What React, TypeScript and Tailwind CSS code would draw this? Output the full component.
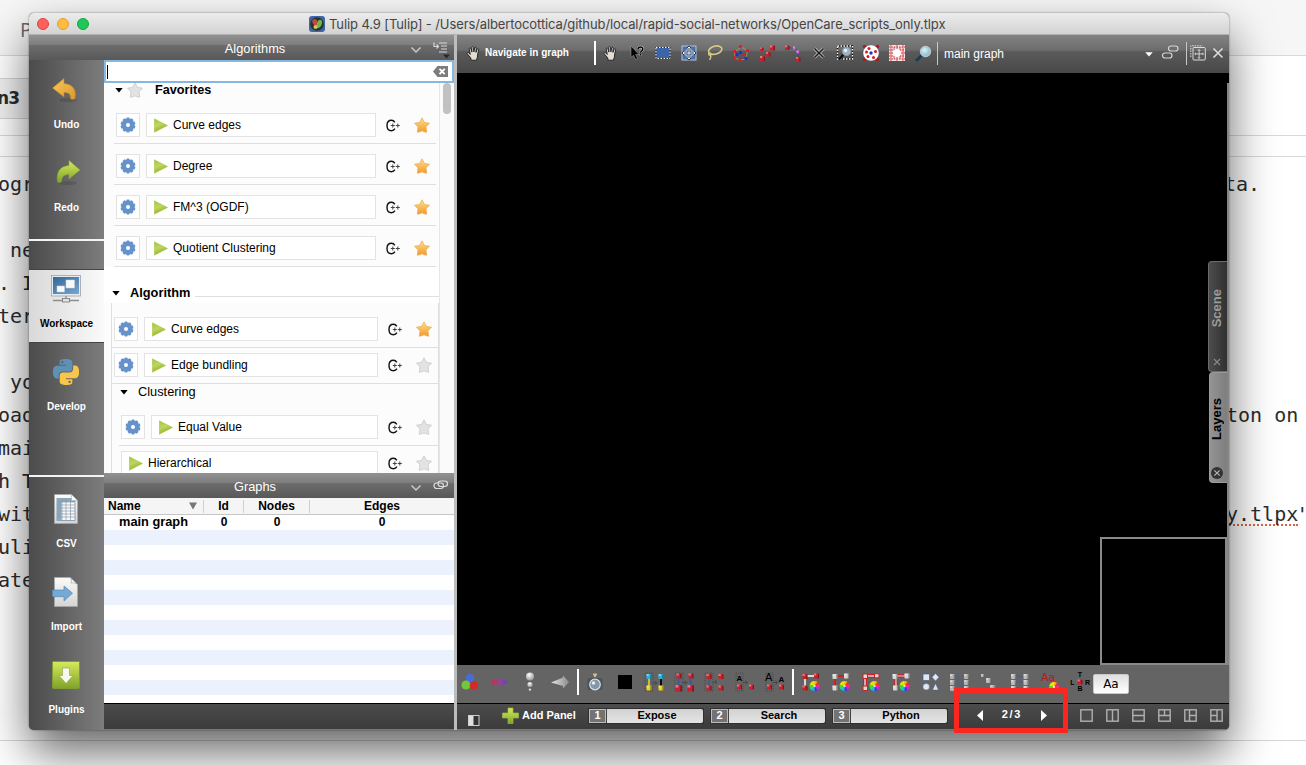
import React from "react";
import { clsx } from "clsx";

/* ---------- text behind the window ---------- */

const leftLines = ["ogr", "", " ne", ". I", "ter", "", " yo", "oad", "mai", "h T", "wit", "uli", "ate"];

function BackgroundPage() {
  return (
    <div className="flex h-full w-full flex-col bg-white text-[#2c2c2c]">
      <div className="flex h-[56px] shrink-0 items-center border-b border-[#d9d9d9] bg-[#f6f6f6] pl-5 pt-1 font-['Open_Sans',sans-serif] text-[20px] text-[#666]">
        P
      </div>
      <div className="flex h-[80px] shrink-0 items-center border-b border-[#d9d9d9] pt-[5px]">
        <div className="flex h-[41px] w-[60px] items-center overflow-hidden rounded-r border border-l-0 border-[#d4d4d4] bg-[#f1f1f1]">
          <span className="-ml-[3px] mt-[2px] font-['DejaVu_Sans',sans-serif] text-[17px] font-bold tracking-[-0.800px]">n3</span>
        </div>
      </div>
      <div className="h-[21px] shrink-0 border-b border-[#d9d9d9]" />
      <div className="flex h-[584px] shrink-0 flex-col overflow-hidden border-b border-[#d5d5d5] pt-[11px] font-['DejaVu_Sans_Mono',monospace] text-[20px] leading-[33px]">
        {leftLines.map((t, i) => (
          <div key={i} className="flex h-[33px] shrink-0">
            <span className="-ml-[2px] w-[1228px] shrink-0 whitespace-pre">{t}</span>
            {i === 0 && <span className="-ml-[2px]">ta.</span>}
            {i === 7 && <span className="whitespace-pre">ton on</span>}
            {i === 10 && (
              <span className="flex whitespace-pre">
                <span className="h-[28px] border-b-2 border-dotted border-[#d9644c]">y.tlpx</span>
                <span className="-ml-[2px]">'</span>
              </span>
            )}
          </div>
        ))}
      </div>
    </div>
  );
}

/* ---------- shared drawings ---------- */

const PY =
  "M14.25.18l.9.2.73.26.59.3.45.32.34.34.25.34.16.33.1.3.04.26.02.2-.01.13V8.5l-.05.63-.13.55-.21.46-.26.38-.3.31-.33.25-.35.19-.35.14-.33.1-.3.07-.26.04-.21.02H8.77l-.69.05-.59.14-.5.22-.41.27-.33.32-.27.35-.2.36-.15.37-.1.35-.07.32-.04.27-.02.21v3.06H3.17l-.21-.03-.28-.07-.32-.12-.35-.18-.36-.26-.36-.36-.35-.46-.32-.59-.28-.73-.21-.88-.14-1.05-.05-1.23.06-1.22.16-1.04.24-.87.32-.71.36-.57.4-.44.42-.33.42-.24.4-.16.36-.1.32-.05.24-.01h.16l.06.01h8.16v-.83H6.18l-.01-2.75-.02-.37.05-.34.11-.31.17-.28.25-.26.31-.23.38-.2.44-.18.51-.15.58-.12.64-.1.71-.06.77-.04.84-.02 1.27.05zm-6.3 1.98l-.23.33-.08.41.08.41.23.34.33.22.41.09.41-.09.33-.22.23-.34.08-.41-.08-.41-.23-.33-.33-.22-.41-.09-.41.09z";

function Gradients() {
  return (
    <svg className="absolute h-0 w-0">
      <defs>
        <linearGradient id="gold" x1="0" y1="0" x2="0" y2="1">
          <stop offset="0" stopColor="#fde08a" />
          <stop offset="1" stopColor="#f39a2e" />
        </linearGradient>
        <linearGradient id="undoG" x1="0" y1="0" x2="1" y2="1">
          <stop offset="0" stopColor="#f9c659" />
          <stop offset="1" stopColor="#d99a2c" />
        </linearGradient>
        <linearGradient id="lime" x1="0" y1="0" x2="0" y2="1">
          <stop offset="0" stopColor="#d6ea5c" />
          <stop offset="1" stopColor="#7fa32a" />
        </linearGradient>
        <linearGradient id="playG" x1="0" y1="0" x2="0.400" y2="1">
          <stop offset="0" stopColor="#a0c43e" />
          <stop offset="0.500" stopColor="#bfd660" />
          <stop offset="1" stopColor="#8fae22" />
        </linearGradient>
        <linearGradient id="screen" x1="0" y1="0" x2="1" y2="1">
          <stop offset="0" stopColor="#336698" />
          <stop offset="1" stopColor="#7ba6cc" />
        </linearGradient>
        <linearGradient id="paper" x1="0" y1="0" x2="0" y2="1">
          <stop offset="0" stopColor="#fbfbfb" />
          <stop offset="1" stopColor="#d4d4d4" />
        </linearGradient>
        <linearGradient id="pinkblue" x1="0" y1="0" x2="1" y2="0">
          <stop offset="0" stopColor="#d3264e" />
          <stop offset="0.5" stopColor="#a23aa5" />
          <stop offset="1" stopColor="#5046c0" />
        </linearGradient>
        <linearGradient id="silver" x1="0" y1="0" x2="1" y2="0">
          <stop offset="0" stopColor="#e6e6e6" />
          <stop offset="1" stopColor="#8b8b8b" />
        </linearGradient>
        <radialGradient id="ball" cx="0.4" cy="0.3" r="0.7">
          <stop offset="0" stopColor="#fff" />
          <stop offset="1" stopColor="#999" />
        </radialGradient>
        <radialGradient id="lens" cx="0.4" cy="0.35" r="0.7">
          <stop offset="0" stopColor="#d8f4fa" />
          <stop offset="1" stopColor="#7cb5cc" />
        </radialGradient>
      </defs>
    </svg>
  );
}

function Node({ x, y, s = 5, c = "#c8202c" }: { x: number; y: number; s?: number; c?: string }) {
  return (
    <g>
      <rect x={x} y={y} width={s} height={s} rx="0.8" fill={c} />
      <rect x={x} y={y} width={s * 0.45} height={s * 0.4} fill="#fff" opacity="0.4" />
      <rect x={x + s * 0.75} y={y + 0.5} width={s * 0.25} height={s - 0.5} fill="#000" opacity="0.35" />
    </g>
  );
}

const wheelColors = ["#ffb300", "#ff2a1a", "#ff1fa8", "#c020ff", "#2f35ff", "#15b6ff", "#14e58a", "#4be01a", "#d8f000", "#ffe600"];
function Wheel({ cx, cy, r }: { cx: number; cy: number; r: number }) {
  return (
    <g>
      {wheelColors.map((c, i) => {
        const a = (i / 10) * Math.PI * 2 - Math.PI / 2;
        const b = ((i + 1.05) / 10) * Math.PI * 2 - Math.PI / 2;
        return (
          <path
            key={c}
            fill={c}
            d={`M${cx} ${cy}L${cx + r * Math.cos(a)} ${cy + r * Math.sin(a)}A${r} ${r} 0 0 1 ${cx + r * Math.cos(b)} ${cy + r * Math.sin(b)}Z`}
          />
        );
      })}
      <circle cx={cx} cy={cy} r={r * 0.25} fill="#fff" opacity="0.7" />
    </g>
  );
}

function Ico({ children, w = 20, h = 20 }: { children: React.ReactNode; w?: number; h?: number }) {
  return (
    <svg width={w} height={h} viewBox={`0 0 ${w} ${h}`} className="shrink-0 overflow-visible">
      {children}
    </svg>
  );
}

function Hand() {
  return (
    <Ico w={16} h={16}>
      <path
        d="M5.2 15.2 4.7 12.8 1.2 8.8c-.6-.9.6-1.7 1.4-1l1.7 1.6L3.2 4c-.2-1.1 1.3-1.4 1.7-.3l1 3.4-.1-4.6c0-1.2 1.6-1.2 1.7 0l.4 4.4.7-4c.2-1.1 1.7-.9 1.6.2l-.3 4.3 1.3-3.1c.4-1 1.7-.6 1.5.4l-1 4.2-.3 3.2-1 3.1z"
        fill="#e4ddd6"
        stroke="#1c1c1c"
        strokeWidth="0.9"
      />
    </Ico>
  );
}

/* ---------- left sidebar ---------- */

const UndoIcon = () => (
  <Ico w={28} h={28}>
    <ellipse cx="16" cy="24" rx="9" ry="2" fill="#000" opacity="0.12" />
    <path d="M0.500 12 12 2.500v5C20 8 25 13 23 22.500c-.5 1-3 1-4.500.300C19 18.500 17 16.500 12 16.600V21z" fill="url(#undoG)" stroke="#c0842a" strokeWidth="0.6" />
  </Ico>
);
const RedoIcon = () => (
  <Ico w={28} h={28}>
    <ellipse cx="16" cy="24" rx="9" ry="2" fill="#000" opacity="0.12" />
    <path d="M28 11 17 1.500v5C9 7 4 12 5.500 22.500c.5 1.200 2.500 1.200 4 .300C9.500 18 12 15.500 17 15.600V20z" fill="url(#lime)" stroke="#86a838" strokeWidth="0.6" />
  </Ico>
);
const WorkspaceIcon = () => (
  <Ico w={32} h={28}>
    <rect x="1.500" y="0.500" width="29" height="20.500" fill="#e6ebef" stroke="#9aa4ad" strokeWidth="0.8" />
    <rect x="3" y="2" width="26" height="17" fill="url(#screen)" />
    <rect x="16" y="5" width="8.500" height="8" fill="#f7f9fb" stroke="#c9d6e2" strokeWidth="0.5" />
    <rect x="7" y="11" width="7.500" height="6" fill="#f7f9fb" stroke="#c9d6e2" strokeWidth="0.5" />
    <path d="M16 21v2.500M3 25.500h26" stroke="#8d8d8d" strokeWidth="1.300" />
    <rect x="12.500" y="23.500" width="7" height="3.500" fill="#e2e2e2" stroke="#777" strokeWidth="0.8" />
  </Ico>
);
const PythonIcon = () => (
  <svg width="26" height="26" viewBox="0 0 24 24">
    <path d={PY} fill="#5d92b6" />
    <path d={PY} fill="#f7c64a" transform="rotate(180 12 12)" />
  </svg>
);
const CsvIcon = () => (
  <Ico w={24} h={30}>
    <path d="M.5.500h17l6 6v23H.500z" fill="url(#paper)" stroke="#a9a9a9" strokeWidth="0.7" />
    <rect x="3" y="4.500" width="18" height="22" fill="#f7f9fa" stroke="#7e919e" strokeWidth="0.8" />
    <path d="M3 4.500h18V8H3zM3 8h4.500v18.500H3z" fill="#84abc4" />
    <path d="M3 8h18M3 11h18M3 14h18M3 17h18M3 20h18M3 23h18M8 4.500v22M12 4.500v22M16.500 4.500v22" stroke="#8a9aa5" strokeWidth="0.7" />
    <path d="M17.500.500v6h6z" fill="#fff" stroke="#aaa" strokeWidth="0.6" />
  </Ico>
);
const ImportIcon = () => (
  <Ico w={24} h={30}>
    <path d="M.5.500h16l7 7v22H.500z" fill="url(#paper)" stroke="#a9a9a9" strokeWidth="0.7" />
    <path d="M16 .500c2 1 1.500 4 1 5.500 2-.5 5 0 6.500 1.500z" fill="#fff" stroke="#999" strokeWidth="0.6" />
    <path d="M-1.500 13H10V9l8.500 7.200L10 24v-4.300H-1.500z" fill="#76a9d4" stroke="#5588b4" strokeWidth="0.7" />
  </Ico>
);
const PluginsIcon = () => (
  <Ico w={28} h={28}>
    <rect x="0.500" y="0.500" width="27" height="27" rx="1" fill="url(#lime)" stroke="#7f9d30" />
    <path d="M10.500 7h7v7.500H21L14 22.500 7 14.500h3.500z" fill="#f6f7ee" stroke="#8da339" strokeWidth="0.6" />
  </Ico>
);

function SideItem({ label, icon, active = false, short = false }: { label: string; icon: React.ReactNode; active?: boolean; short?: boolean }) {
  return (
    <div
      className={clsx(
        "flex shrink-0 flex-col items-center",
        short ? "h-[74px]" : "h-[83px]",
        active ? "border-y border-[#444] bg-linear-to-r from-[#d9d9d9] to-[#fafafa] text-black" : "text-white"
      )}
    >
      <div className={clsx("flex items-center justify-center pr-[2px]", active ? "h-[38px]" : "h-[40px]")}>{icon}</div>
      <div className={clsx("text-[10px] font-bold leading-[14px]", active ? "mt-[9px]" : "mt-[8px]")}>{label}</div>
    </div>
  );
}

function Sidebar() {
  return (
    <div className="flex w-[75px] shrink-0 flex-col bg-linear-to-r from-[#4b4b4b] to-[#7d7d7d]">
      <div className="h-[10px] shrink-0" />
      <SideItem label="Undo" icon={<UndoIcon />} />
      <SideItem label="Redo" icon={<RedoIcon />} />
      <div className="mb-[28px] mt-[3px] h-[2px] shrink-0 bg-[#f4f4f4]" />
      <SideItem label="Workspace" icon={<WorkspaceIcon />} active short />
      <div className="h-[9px] shrink-0" />
      <SideItem label="Develop" icon={<PythonIcon />} />
      <div className="mb-[12px] mt-[40px] h-[2px] shrink-0 bg-[#f4f4f4]" />
      <SideItem label="CSV" icon={<CsvIcon />} />
      <SideItem label="Import" icon={<ImportIcon />} />
      <SideItem label="Plugins" icon={<PluginsIcon />} short />
    </div>
  );
}

/* ---------- algorithms panel ---------- */

const Star = ({ on, size = 16 }: { on: boolean; size?: number }) => (
  <svg width={size} height={size} viewBox="0 0 20 20">
    <path
      d="M10 1l3 5.800 6.400.9-4.400 4.600.9 6.700-3.500-.6Q10 16.200 7.600 18.400l-3.500.6.900-6.700L.6 7.700 7 6.800z"
      fill={on ? "url(#gold)" : "#e3e3e3"}
      stroke={on ? "#e9ac50" : "#c4c4c4"}
      strokeWidth="0.9"
    />
  </svg>
);

const Gear = () => (
  <svg width="16" height="16" viewBox="0 0 16 16">
    {[0, 36, 72, 108, 144].map((a) => (
      <rect key={a} x="6.300" y="0.500" width="3.400" height="15" rx="1.200" fill="#6592cb" transform={`rotate(${a} 8 8)`} />
    ))}
    <circle cx="8" cy="8" r="6.200" fill="#6592cb" />
    <circle cx="8" cy="8" r="2" fill="#fff" />
  </svg>
);

const Play = () => (
  <svg width="15" height="15" viewBox="0 0 15 15" className="shrink-0">
    <path d="M.3.800 13.500 7.500.300 14.200z" fill="url(#playG)" stroke="#a9c544" strokeWidth="0.6" />
  </svg>
);

const Cpp = () => (
  <svg width="14" height="13" viewBox="0 0 14 13">
    <path d="M8.800 3.300C8 1.900 6.800 1.300 5.500 1.300 2.800 1.300 1 3.500 1 6.500s1.800 5.200 4.500 5.200c1.500 0 2.700-.8 3.400-2.100" fill="none" stroke="#111" strokeWidth="1.400" />
    <path d="M4.800 6.500h4M6.800 4.500v4M9.800 6.500h4M11.800 4.500v4" stroke="#444" strokeWidth="1" />
  </svg>
);

const Tri = () => (
  <svg width="8" height="5" viewBox="0 0 8 5" className="shrink-0">
    <path d="M.3 0h7.400L4 4.600z" fill="#000" />
  </svg>
);

type RowProps = { label: string; on?: boolean; gear?: boolean; kind: "fav" | "top" | "sub" };

function AlgoRow({ label, on = false, gear = true, kind }: RowProps) {
  return (
    <div
      className={clsx(
        "flex shrink-0 items-start border-b border-[#dfdfdf]",
        kind === "fav" && "ml-[10px] mr-[3px] h-[41px] pl-[2px] pt-[10px]",
        kind === "top" && "h-[36px] pl-[2px] pt-[5px]",
        kind === "sub" && "ml-[7px] h-[36px] pl-[2px] pt-[5px]"
      )}
    >
      {gear && (
        <div className="mr-[6px] flex h-6 w-6 shrink-0 items-center justify-center border border-[#e3e3e3] bg-white">
          <Gear />
        </div>
      )}
      <div className="flex h-6 min-w-0 flex-1 items-center gap-[4px] border border-[#e3e3e3] bg-white pl-[7px] text-[12px] text-black">
        <Play />
        <span>{label}</span>
      </div>
      <div className="ml-[10px] flex h-6 w-[14px] items-center">
        <Cpp />
      </div>
      <div className="ml-[14px] mr-[6px] flex h-6 items-center">
        <Star on={on} />
      </div>
    </div>
  );
}

function PanelHeader({ title, icon }: { title: string; icon: React.ReactNode }) {
  return (
    <div className="flex h-[25px] items-center bg-[linear-gradient(#929292,#7d7d7d_40%,#6c6c6c_42%,#585858)] text-[12.800px] text-white">
      <div className="w-[302px] pt-[2px] text-center">{title}</div>
      <div className="flex flex-1 items-center justify-end gap-[11px] pr-[6px]">
        <svg width="12" height="8" viewBox="0 0 12 8" className="mt-1">
          <path d="M1.500 1.500 6 6l4.500-4.500" fill="none" stroke="#c9c9c9" strokeWidth="1.500" />
        </svg>
        {icon}
      </div>
    </div>
  );
}

function AlgorithmsPanel() {
  return (
    <div className="flex h-[413px] shrink-0 flex-col overflow-hidden bg-white">
      <div className="flex h-[23px] shrink-0 items-center border-2 border-[#86b6e2] bg-white pr-[4px]">
        <div className="ml-[1px] h-[14px] w-[1px] bg-black" />
        <div className="flex-1" />
        <svg width="15" height="11" viewBox="0 0 15 11">
          <path d="M4.500 0H15v11H4.500L0 5.500z" fill="#7c7c7c" />
          <path d="M6.500 2.800l5.200 5.400M11.700 2.800 6.500 8.200" stroke="#fff" strokeWidth="1.900" />
        </svg>
      </div>
      <div className="flex min-h-0 flex-1">
        <div className="flex w-[335px] shrink-0 flex-col overflow-hidden bg-[#fcfcfc] text-black">
          <div className="flex h-[20px] shrink-0 items-start pl-[11px]">
            <div className="flex h-[14px] items-center">
              <Tri />
              <div className="ml-[4px] w-[28px]">
                <Star on={false} size={16} />
              </div>
              <span className="mt-[2px] text-[12.7px] font-bold">Favorites</span>
            </div>
          </div>
          <AlgoRow kind="fav" label="Curve edges" on />
          <AlgoRow kind="fav" label="Degree" on />
          <AlgoRow kind="fav" label="FM^3 (OGDF)" on />
          <AlgoRow kind="fav" label="Quotient Clustering" on />
          <div className="flex h-[36px] shrink-0 bg-white pl-[8px] pt-[18px]">
            <div className="flex h-[16px] flex-1 items-center">
              <Tri />
              <span className="ml-[10px] text-[12.8px] font-bold">Algorithm</span>
              <div className="ml-[5px] mt-[6px] h-px flex-1 bg-[#dfdfdf]" />
            </div>
          </div>
          <div className="ml-[7px] flex shrink-0 flex-col border-l border-r border-[#dfdfdf] pt-[9px]">
            <AlgoRow kind="top" label="Curve edges" on />
            <AlgoRow kind="top" label="Edge bundling" />
            <div className="flex h-[26px] shrink-0 items-start pl-[8px]">
              <div className="flex h-[16px] items-center gap-[10px]">
                <Tri />
                <span className="text-[12.8px]">Clustering</span>
              </div>
            </div>
            <AlgoRow kind="sub" label="Equal Value" />
            <AlgoRow kind="sub" label="Hierarchical" gear={false} />
          </div>
        </div>
        <div className="flex flex-1 justify-center border-l border-[#e6e6e6] bg-[#fafafa]">
          <div className="h-[31px] w-[8px] rounded-full bg-[#c1c1c1]" />
        </div>
      </div>
    </div>
  );
}

/* ---------- graphs panel ---------- */

function GraphsPanel() {
  return (
    <div className="flex min-h-0 flex-1 flex-col bg-white text-[12px] font-bold text-black">
      <div className="flex h-[17px] shrink-0 items-center border-b border-[#c6c6c6] bg-[#f5f5f5]">
        <div className="flex h-[13px] w-[100px] items-center justify-between border-r border-[#cfcfcf] pl-[4px] pr-[6px]">
          Name
          <svg width="8" height="8" viewBox="0 0 9 8">
            <path d="M0 0h9L4.500 8z" fill="#777" />
          </svg>
        </div>
        <div className="flex h-[13px] w-[40px] items-center justify-center border-r border-[#cfcfcf]">Id</div>
        <div className="flex h-[13px] w-[66px] items-center justify-center border-r border-[#cfcfcf]">Nodes</div>
        <div className="flex flex-1 items-center justify-center">Edges</div>
      </div>
      <div className="flex h-[15px] shrink-0 items-center pb-[2px]">
        <div className="w-[100px] pl-[15px] text-[12.8px]">main graph</div>
        <div className="w-[40px] text-center">0</div>
        <div className="w-[66px] text-center">0</div>
        <div className="flex-1 text-center">0</div>
      </div>
      {Array.from({ length: 11 }, (_, i) => (
        <div key={i} className={clsx("h-[15px] shrink-0", i % 2 === 0 ? "bg-[#ebf1fd]" : "bg-white")} />
      ))}
    </div>
  );
}

/* ---------- view toolbar ---------- */

const topIcons: React.ReactNode[] = [
  <Hand />,
  <Ico w={16} h={16}>
    <path d="M2 1v11.500l2.600-2.300 2 4.300 2-1-2-4.100h3.200z" fill="#000" stroke="#aaa" strokeWidth="0.500" />
    <path d="M9 4.200c0-3 5-3 4.800 0 0 1.800-2.200 1.600-2.200 3.500M11.600 8.900v1.500" fill="none" stroke="#ddd" strokeWidth="2.400" />
    <path d="M9 4.200c0-3 5-3 4.800 0 0 1.800-2.200 1.600-2.200 3.500M11.600 8.900v1.500" fill="none" stroke="#000" strokeWidth="1.500" />
  </Ico>,
  <Ico w={16} h={14}>
    <rect x="1" y="1.500" width="14" height="11" fill="#3c64a8" stroke="#1c2430" />
    <rect x="1" y="1.500" width="14" height="11" fill="none" stroke="#fff" strokeDasharray="1.500 1.500" />
  </Ico>,
  <Ico w={16} h={16}>
    <rect x="1" y="1" width="14" height="14" fill="#4c70aa" stroke="#b4c4dc" />
    <path d="M5 5h6v6H5z" fill="none" stroke="#c8d4e8" strokeWidth="0.800" />
    <path d="M8 2v12M2 8h12M6.500 3.500 8 2l1.500 1.500M6.500 12.500 8 14l1.500-1.500M3.500 6.500 2 8l1.500 1.500M12.500 6.500 14 8l-1.500 1.500" fill="none" stroke="#1e2c48" strokeWidth="2" />
    <path d="M8 2v12M2 8h12M6.500 3.500 8 2l1.500 1.500M6.500 12.500 8 14l1.500-1.500M3.500 6.500 2 8l1.500 1.500M12.500 6.500 14 8l-1.500 1.500" fill="none" stroke="#fff" strokeWidth="1" />
  </Ico>,
  <Ico w={18} h={16}>
    <ellipse cx="9.500" cy="5" rx="6.800" ry="4" fill="none" stroke="#d8ca8a" strokeWidth="1.600" transform="rotate(-15 10 6)" />
    <path d="M3.500 8c-1.500 1-1 2.600.8 2.200 1.500-.5.500-2.500-.7-2M4.500 10c1 2 0 3.500-1 5" fill="none" stroke="#d8ca8a" strokeWidth="1.300" />
  </Ico>,
  <Ico w={18} h={18}>
    <path d="M9 3 15.500 6.500 14 15 8 16 3 14 2.500 8z" fill="none" stroke="#b8a36a" strokeWidth="0.700" />
    {[[8.500, 2.500], [15.500, 6.500], [3, 7.500], [2.500, 13.500], [8, 16], [12, 10.500]].map(([x, y]) => (
      <circle key={`${x}`} cx={x} cy={y} r="1.600" fill="#e01820" />
    ))}
    {[[8.500, 8.500], [5, 10.500], [14, 14.500]].map(([x, y]) => (
      <circle key={`${x}`} cx={x} cy={y} r="1.700" fill="#2030d8" />
    ))}
  </Ico>,
  <Ico w={18} h={18}>
    <Node x={12} y={1.500} />
    <Node x={2} y={3.500} s={3.500} />
    <Node x={8} y={8} s={4.500} />
    <Node x={2} y={12} />
  </Ico>,
  <Ico w={18} h={18}>
    <path d="M4 4h7l3 4v6" fill="none" stroke="#4a4070" strokeWidth="0.800" />
    <Node x={1} y={1.500} s={4.500} />
    <Node x={9} y={2.500} s={3} c="#d26bf0" />
    <Node x={12.500} y={6.500} s={3} c="#d26bf0" />
    <Node x={12} y={13} s={4.500} />
  </Ico>,
  <Ico w={12} h={12}>
    <path d="M1.500 1.500l9 9M10.500 1.500l-9 9" stroke="#d0d0d0" strokeWidth="3" />
    <path d="M1.500 1.500l9 9M10.500 1.500l-9 9" stroke="#1a1a1a" strokeWidth="1.600" />
  </Ico>,
  <Ico w={18} h={16}>
    <rect x="1.500" y="1" width="15" height="13" fill="none" stroke="#111" strokeWidth="1.300" />
    <rect x="1.500" y="1" width="15" height="13" fill="none" stroke="#fff" strokeWidth="1.300" strokeDasharray="1.500 1.500" />
    <path d="M8 9 3 14.500" stroke="#111" strokeWidth="2.600" />
    <circle cx="10.500" cy="6.500" r="4.200" fill="#9db3c6" stroke="#8898a5" />
    <circle cx="9.500" cy="5.500" r="1.800" fill="#e4eef6" />
  </Ico>,
  <Ico w={18} h={18}>
    {[[2.500, 2.500], [15.500, 2.500], [2.500, 15.500], [15.500, 15.500]].map(([x, y]) => (
      <circle key={`${x}${y}`} cx={x} cy={y} r="1.700" fill="#a81a20" />
    ))}
    <circle cx="9" cy="9" r="7.800" fill="#fff" />
    {[[7, 4.500], [13.500, 7.500], [4.500, 8], [11.500, 13.500], [6, 12.500]].map(([x, y]) => (
      <circle key={`${x}${y}`} cx={x} cy={y} r="1.500" fill="#d81820" />
    ))}
    <circle cx="9" cy="9" r="1.700" fill="#2233c8" />
  </Ico>,
  <Ico w={16} h={16}>
    <rect width="16" height="16" fill="#f6e8e8" />
    <path d="M0 2h16M0 5h5M11 5h5M0 8h4M12 8h4M0 11h5M11 11h5M0 14h16" stroke="#cf3038" strokeWidth="1.100" strokeDasharray="1.500 1" />
    <path d="M2 0v16M14 0v16M8 0v4M8 12v4M5 2v3M11 2v3M5 11v3M11 11v3" stroke="#cf3038" strokeWidth="0.800" />
    <circle cx="8" cy="8" r="3.500" fill="#fff" />
  </Ico>,
  <Ico w={17} h={17}>
    <path d="M7 10 2 15" stroke="#1c3b58" strokeWidth="3" strokeLinecap="round" />
    <circle cx="10.500" cy="6.500" r="5" fill="url(#lens)" stroke="#b9c6cc" strokeWidth="1.300" />
  </Ico>,
];

function ViewToolbar() {
  return (
    <div className="flex h-[38px] shrink-0 items-center bg-[linear-gradient(#828282,#6c6c6c_40%,#5a5a5a_44%,#484848)] pb-[2px] text-white">
      <div className="flex w-[137px] shrink-0 items-center gap-[3px] pl-[9px]">
        <Hand />
        <span className="mb-[1px] whitespace-nowrap text-[10px] font-bold">Navigate in graph</span>
      </div>
      <div className="h-[24px] w-[2px] shrink-0 bg-white" />
      <div className="ml-[2px] flex shrink-0">
        {topIcons.map((ic, i) => (
          <div key={i} className="flex h-[24px] w-[26px] items-center justify-center">
            {ic}
          </div>
        ))}
      </div>
      <div className="ml-[1px] h-[23px] w-px shrink-0 bg-[#c8c8c8]" />
      <div className="flex h-[22px] flex-1 items-center justify-between pl-[6px] pr-[8px]">
        <span className="mt-[2px] text-[12px]">main graph</span>
        <svg width="8" height="5" viewBox="0 0 8 5" className="mt-[2px]">
          <path d="M.3.300h7.400L4 4.500z" fill="#fff" />
        </svg>
      </div>
      <div className="flex w-[33px] shrink-0 items-center pb-[2px]">
        <Ico w={18} h={14}>
          <rect x="7.500" y="1" width="9.500" height="5" rx="2.500" fill="none" stroke="#d6d6d6" strokeWidth="1.200" />
          <rect x="1.500" y="8" width="9.500" height="5" rx="2.500" fill="none" stroke="#d6d6d6" strokeWidth="1.200" />
        </Ico>
      </div>
      <div className="-ml-[8px] mr-[3px] h-[23px] w-px shrink-0 bg-[#c8c8c8]" />
      <Ico w={16} h={16}>
        <path d="M.8 12V.800H12.500" fill="none" stroke="#ddd" strokeDasharray="1.500 1" />
        <rect x="3" y="2.500" width="12.300" height="12.500" rx="1" fill="none" stroke="#ddd" />
        <path d="M9.100 4.500v9M4.800 8.900h8.700M8 5.600l1.100-1.100 1.100 1.100M8 12.300l1.100 1.100 1.100-1.100M6 7.800 4.800 8.900 6 10M12.400 7.800l1.100 1.100-1.100 1.100" fill="none" stroke="#ddd" strokeWidth="0.900" />
      </Ico>
      <div className="ml-[6px] mr-[5px]">
        <Ico w={12} h={12}>
          <path d="M1.500 1.500l9 9M10.500 1.500l-9 9" stroke="#dcdcdc" strokeWidth="1.600" />
        </Ico>
      </div>
    </div>
  );
}

/* ---------- rendering toolbar ---------- */

const Arr = ({ x = 9, y = 10 }: { x?: number; y?: number }) => (
  <path d={`M${x} ${y}h4M${x + 2.5} ${y - 2}l2 2-2 2`} fill="none" stroke="#444" strokeWidth="0.900" />
);
const Dots = ({ x = 0, y = 0, w = 7, h = 18 }) => (
  <rect x={x} y={y} width={w} height={h} fill="none" stroke="#3a3a3a" strokeWidth="0.600" strokeDasharray="1 1" />
);

const groupA = [
  <Ico w={18} h={18}>
    <circle cx="9" cy="5" r="4.300" fill="#4a6ad8" />
    <circle cx="5" cy="12" r="4.500" fill="#72c83a" />
    <circle cx="13" cy="12.500" r="4.300" fill="#d32a2a" />
  </Ico>,
  <Ico w={18} h={18}>
    <path d="M1 6.500h9V4l7 5-7 5v-2.500H1z" fill="url(#pinkblue)" opacity="0.850" />
  </Ico>,
  <Ico w={12} h={20}>
    <circle cx="6" cy="4.500" r="4" fill="url(#ball)" />
    <circle cx="6" cy="12.500" r="2.600" fill="url(#ball)" />
    <circle cx="6" cy="17.800" r="1.300" fill="url(#ball)" />
  </Ico>,
  <Ico w={20} h={18}>
    <path d="M1 9.500 13 4.500V2.500l6 6.500-6 6.500V13z" fill="url(#silver)" />
  </Ico>,
];

const groupB = [
  <Ico w={18} h={20}>
    <path d="M7 2.500h4M9 2v3" stroke="#d2b98c" strokeWidth="2" />
    <rect x="1.500" y="6" width="15" height="12" rx="2" fill="#4b535c" />
    <circle cx="9" cy="12.500" r="5.300" fill="#8497a8" stroke="#d8dde2" strokeWidth="1.200" />
    <circle cx="7.500" cy="11" r="1.700" fill="#e6eef5" />
  </Ico>,
  <Ico w={14} h={14}>
    <rect width="14" height="14" fill="#000" />
  </Ico>,
  <Ico w={20} h={18}>
    <Dots x={0} w={8} />
    <path d="M4 3v11" stroke="#e4d330" strokeWidth="1.600" />
    <path d="M16 3v11" stroke="#000" strokeWidth="1.800" />
    <Node x={1.500} y={1} c="#28b4d8" />
    <Node x={13.500} y={1} c="#28b4d8" />
    <Node x={1.500} y={12.500} c="#e8d21c" />
    <Node x={13.500} y={12.500} c="#e8d21c" />
    <Arr x={7.500} y={10} />
  </Ico>,
  <Ico w={20} h={18}>
    <Dots x={0} w={8} />
    <path d="M3.500 3v11M15.500 3v11" stroke="#34569c" strokeWidth="1.500" />
    <Node x={1.500} y={0.500} />
    <Node x={13.500} y={0.500} />
    <Node x={0.500} y={12} s={6.500} />
    <Node x={12.500} y={12} s={6.500} />
    <Arr x={7.500} y={9.500} />
  </Ico>,
  <Ico w={20} h={18}>
    <Dots x={0} w={8} />
    <path d="M4 4v10" stroke="#34569c" strokeWidth="1.200" />
    <Node x={1.500} y={1} />
    <Node x={13.500} y={1} />
    <Node x={1.500} y={12.500} />
    <Node x={13.500} y={12.500} />
    <Arr x={7.500} y={9} />
  </Ico>,
  <Ico w={20} h={18}>
    <Dots x={1} y={0} w={7} />
    <text x="1.500" y="8" fontSize="8" fontWeight="bold" fill="#000">A</text>
    <Node x={2} y={11.500} />
    <Node x={14} y={11.500} />
    <Arr x={8} y={9.500} />
  </Ico>,
  <Ico w={20} h={18}>
    <Dots x={1} y={0} w={7} />
    <text x="0" y="8" fontSize="11" fill="#000">A</text>
    <text x="13.500" y="8.500" fontSize="8" fontWeight="bold" fill="#000">A</text>
    <Node x={2} y={11.500} />
    <Node x={14} y={11.500} />
    <Arr x={8} y={9.500} />
  </Ico>,
];

const W = "#d8d8d8";
const R = "#cc2029";

function EdgeWheel({ node, edge, far }: { node: string; edge: string; far: string }) {
  return (
    <Ico w={18} h={18}>
      <path d="M3 16V3h11" fill="none" stroke={edge} strokeWidth="2" />
      <Node x={0.500} y={1} c={node} />
      <Node x={12} y={0.500} c={far} />
      <Node x={0.500} y={12.500} c={node} />
      <Wheel cx={12.500} cy={13} r={5} />
    </Ico>
  );
}

const groupC = [
  <EdgeWheel node={R} edge={W} far={R} />,
  <EdgeWheel node={W} edge={R} far={W} />,
  <Ico w={18} h={18}>
    <path d="M3 16V3h12" fill="none" stroke={R} strokeWidth="4" />
    <path d="M3 16V3h12" fill="none" stroke={W} strokeWidth="1.500" />
    <rect x="1" y="1" width="4.500" height="4.500" fill={W} stroke={R} />
    <rect x="12.500" y="0.800" width="4.500" height="4" fill={W} stroke={R} />
    <rect x="1" y="13" width="4.500" height="4.500" fill={W} stroke={R} />
    <Wheel cx={12.500} cy={13} r={5} />
  </Ico>,
  <Ico w={18} h={18}>
    <path d="M4 16V3h11" fill="none" stroke={R} strokeWidth="3.500" />
    <path d="M4 16V3h11" fill="none" stroke={W} strokeWidth="1.200" />
    <Node x={0.500} y={1} c={W} />
    <Node x={12.500} y={0.500} c={W} />
    <Node x={1} y={12.500} c={W} />
    <Wheel cx={12.500} cy={13} r={5} />
  </Ico>,
  <Ico w={18} h={18}>
    <rect x="1" y="1" width="6.500" height="6.500" fill="#dfe7f2" stroke="#4a6188" strokeWidth="0.700" />
    <path d="M13.500 0.500 17 4.200 13.500 8 10 4.200z" fill="#dfe7f2" stroke="#4a6188" strokeWidth="0.500" />
    <circle cx="4.200" cy="13.800" r="3.300" fill="#dfe7f2" stroke="#4a6188" strokeWidth="0.500" />
    <path d="M13.500 10.500 16.500 17h-6z" fill="#dfe7f2" stroke="#4a6188" strokeWidth="0.500" />
  </Ico>,
  <Ico w={20} h={18}>
    <path d="M4 3h4v12M12 3v12" stroke="#45608e" strokeWidth="0.800" fill="none" />
    {[1, 7, 13].map((y) => (
      <g key={y}>
        <Node x={0} y={y} c="#b4b4b4" />
        <Node x={14} y={y} c="#b4b4b4" />
      </g>
    ))}
    <path d="M10 12l2 3 2-3" fill="none" stroke="#45608e" strokeWidth="0.800" />
  </Ico>,
  <Ico w={20} h={18}>
    <Node x={1} y={1} s={3} c="#bcbcbc" />
    <Node x={6} y={5} s={5} c="#bcbcbc" />
    <Node x={10} y={12} s={6} c="#a4a4a4" />
  </Ico>,
  <Ico w={18} h={18}>
    <path d="M5 3h8M5 9h8M5 15h8" stroke="#45608e" />
    {[1, 7, 13].map((y) => (
      <g key={y}>
        <Node x={0} y={y} c="#bcbcbc" />
        <Node x={12.500} y={y} c="#bcbcbc" />
      </g>
    ))}
  </Ico>,
  <Ico w={20} h={20}>
    <text x="1" y="8.500" fontSize="11" fill="#b01c22" fontFamily="DejaVu Sans, sans-serif">Aa</text>
    <Wheel cx={14} cy={15} r={5} />
  </Ico>,
  <Ico w={20} h={20}>
    <g fontSize="7" fontWeight="bold" fill="#000" textAnchor="middle">
      <text x="10" y="5">T</text>
      <text x="2.500" y="12.500">L</text>
      <text x="17.500" y="12.500">R</text>
      <text x="10" y="19">B</text>
    </g>
    <Node x={7.500} y={7.500} />
  </Ico>,
];

function RenderToolbar() {
  return (
    <div className="flex h-[38px] shrink-0 items-center bg-[#646464] pb-[4px]">
      <div className="-ml-[2px] flex shrink-0">
        {groupA.map((ic, i) => (
          <div key={i} className="flex w-[30px] items-center justify-center">
            {ic}
          </div>
        ))}
      </div>
      <div className="ml-[2px] mr-[1px] h-[26px] w-[2px] shrink-0 bg-white" />
      <div className="flex shrink-0">
        {groupB.map((ic, i) => (
          <div key={i} className="flex w-[30px] items-center justify-center">
            {ic}
          </div>
        ))}
      </div>
      <div className="ml-[2px] mr-[2px] h-[26px] w-[2px] shrink-0 bg-white" />
      <div className="flex shrink-0">
        {groupC.map((ic, i) => (
          <div key={i} className="flex w-[29.9px] items-center justify-center">
            {ic}
          </div>
        ))}
      </div>
      <div className="-ml-[2px] mt-[4px] flex h-[20px] w-[36px] items-center justify-center rounded-[2px] border border-[#c9c9c9] bg-linear-to-b from-[#dedede] to-white font-['DejaVu_Sans',sans-serif] text-[12px] text-black">
        Aa
      </div>
    </div>
  );
}

/* ---------- status bar ---------- */

const panels = ["Expose", "Search", "Python"];
const layoutPaths = ["", "M6.500 1v11", "M1 6.500h11", "M1 6.500h11M6.500 1v5.500", "M5.500 1v11M5.500 6.500h6.500", "M7 1v11M1 6.500h6"];

function StatusBar() {
  return (
    <div className="flex h-[26px] shrink-0 items-center border-t border-black bg-linear-to-b from-[#4c4c4c] to-[#3b3b3b] pb-[2px] text-[11px] font-bold text-white">
      <div className="ml-[11px] mt-[9px] w-[34px] shrink-0">
        <Ico w={12} h={11}>
          <rect x="0.500" y="0.500" width="10.500" height="10" fill="#333" stroke="#d0d0d0" />
          <rect x="1" y="1" width="4.500" height="9" fill="#e0e0e0" />
        </Ico>
      </div>
      <Ico w={17} h={17}>
        <path d="M6 1h5v5h5.500v5H11v5.500H6V11H.500V6H6z" fill="url(#lime)" stroke="#9fb83c" strokeWidth="0.700" />
      </Ico>
      <div className="ml-[3px] w-[66px] shrink-0 whitespace-nowrap">Add Panel</div>
      <div className="flex gap-[6px]">
        {panels.map((p, i) => (
          <div key={p} className="flex h-[16px] w-[116px] border border-[#303030]">
            <div className="flex w-[17px] items-center justify-center border border-[#bdbdbd] bg-[#737373]">{i + 1}</div>
            <div className="ml-[1px] flex flex-1 items-center justify-center rounded-r-[2px] bg-linear-to-b from-[#d2d2d2] to-[#e4e4e4] pl-[4px] text-black">{p}</div>
          </div>
        ))}
      </div>
      <div className="ml-[29px] flex w-[70px] shrink-0 items-center justify-between">
        <svg width="6" height="11" viewBox="0 0 6 11">
          <path d="M6 0v11L0 5.500z" fill="#fff" />
        </svg>
        <span className="mb-[2px] tracking-[1.700px]">2/3</span>
        <svg width="6" height="11" viewBox="0 0 6 11">
          <path d="M0 0v11l6-5.500z" fill="#fff" />
        </svg>
      </div>
      <div className="ml-auto mr-[6.500px] flex shrink-0 gap-[13px]">
        {layoutPaths.map((d, i) => (
          <Ico key={i} w={13} h={13}>
            <rect x="0.800" y="0.800" width="11.400" height="11.400" fill="#4a4a4a" stroke="#b0b0b0" strokeWidth="1.400" />
            <path d={d} stroke="#b0b0b0" strokeWidth="1.400" fill="none" />
          </Ico>
        ))}
      </div>
    </div>
  );
}

/* ---------- canvas ---------- */

function Canvas() {
  return (
    <div className="flex min-h-0 flex-1 bg-black">
      <div className="flex-1" />
      <div className="flex w-[127px] shrink-0 flex-col items-end">
        <div className="mt-[188px] flex h-[111px] w-[19px] flex-col items-center justify-between rounded-l-[4px] border border-r-0 border-[#6c6c6c] bg-linear-to-r from-[#4d4d4d] to-[#303030] pb-[5px] pr-[2px] pt-[27px]">
          <span className="rotate-180 text-[13px] font-bold leading-[16px] text-[#9a9a9a] [writing-mode:vertical-rl]">Scene</span>
          <svg width="8" height="8" viewBox="0 0 8 8">
            <path d="M1 1l6 6M7 1 1 7" stroke="#888" strokeWidth="1.200" />
          </svg>
        </div>
        <div className="flex h-[111px] w-[18px] flex-col items-center justify-between rounded-l-[4px] border border-r-0 border-[#9b9b9b] bg-linear-to-r from-[#949494] to-[#7e7e7e] pb-[3px] pr-[3px] pt-[25px]">
          <span className="rotate-180 text-[13px] font-bold leading-[16px] text-black [writing-mode:vertical-rl]">Layers</span>
          <svg width="12" height="12" viewBox="0 0 12 12">
            <circle cx="6" cy="6" r="6" fill="#333" />
            <path d="M3.300 3.300l5.400 5.400M8.700 3.300 3.300 8.700" stroke="#b5b5b5" strokeWidth="1.200" />
          </svg>
        </div>
        <div className="mt-auto h-[128px] w-[127px] border-2 border-[#8a8a8a]" />
      </div>
      <div className="mt-[10px] w-[2px] shrink-0 bg-[#858585]" />
    </div>
  );
}

/* ---------- window ---------- */

function TitleBar() {
  return (
    <div className="flex h-[22px] shrink-0 items-center border-b border-[#b0b0b0] bg-linear-to-b from-[#ececec] to-[#d3d3d3]">
      <div className="flex w-[280px] gap-[8px] pl-[8px] pt-[1px]">
        <div className="h-[12px] w-[12px] rounded-full border border-[#e2443f] bg-[#fc605b]" />
        <div className="h-[12px] w-[12px] rounded-full border border-[#e0a033] bg-[#fdbc40]" />
        <div className="h-[12px] w-[12px] rounded-full border border-[#14a83e] bg-[#1fc758]" />
      </div>
      <Ico w={16} h={16}>
        <rect width="16" height="16" rx="3" fill="#3f66a8" />
        <circle cx="8" cy="8" r="6.800" fill="#26362c" />
        <path d="M3.500 4c2-2 5-1 5 2.500S7 11 5.500 9.500 2.500 6 3.500 4z" fill="#c8473c" />
        <path d="M8.500 6c1-3 4-3 4.500-.5S12 11 9.500 12 7.500 8 8.500 6z" fill="#6fb64a" />
        <circle cx="6.500" cy="11" r="2" fill="#d9c15a" />
      </Ico>
      <span className="ml-[4px] mt-[3px] whitespace-nowrap font-['Inter',sans-serif] text-[13px] tracking-[-0.105px] text-[#454545]">
        Tulip 4.9 [Tulip] - /Users/albertocottica/github/local/rapid-social-networks/OpenCare_scripts_only.tlpx
      </span>
    </div>
  );
}

export default function App() {
  return (
    <div className="relative h-[765px] w-[1306px] overflow-hidden font-['Liberation_Sans',Arial,sans-serif]">
      <Gradients />
      <BackgroundPage />
      <div className="absolute left-[29px] top-[13px] flex h-[717px] w-[1200px] flex-col overflow-hidden rounded-[5px] bg-[#4a4a4a] shadow-[0_22px_46px_rgba(0,0,0,0.6),0_0_2px_rgba(0,0,0,0.5)]">
        <TitleBar />
        <div className="flex min-h-0 flex-1">
          <div className="flex w-[425px] shrink-0 flex-col">
            <div className="shrink-0 bg-[linear-gradient(#929292,#7d7d7d_40%,#6c6c6c_42%,#585858)] pl-[75px]">
              <PanelHeader
                title="Algorithms"
                icon={
                  <Ico w={15} h={14}>
                    <path d="M6 2h8M8 5h6M8 8h6M6 11h8" stroke="#d8d8d8" strokeWidth="1.200" />
                    <path d="M1 1.500v4h4M3.500 3.500l2 2-2 2" fill="none" stroke="#d8d8d8" strokeWidth="1.200" />
                    <path d="M10 13.500h7l-3.500 4z" fill="#1e2a36" />
                  </Ico>
                }
              />
            </div>
            <div className="flex min-h-0 flex-1">
              <Sidebar />
              <div className="flex min-w-0 flex-1 flex-col">
                <AlgorithmsPanel />
                <PanelHeader
                  title="Graphs"
                  icon={
                    <Ico w={15} h={14}>
                      <rect x="1" y="4" width="9.500" height="5.500" rx="2.700" fill="none" stroke="#dcdcdc" strokeWidth="1.200" />
                      <rect x="5" y="2" width="9.500" height="5.500" rx="2.700" fill="none" stroke="#dcdcdc" strokeWidth="1.200" />
                    </Ico>
                  }
                />
                <GraphsPanel />
                <div className="h-[27px] shrink-0 border-b border-t border-b-[#777] border-t-black bg-linear-to-b from-[#4c4c4c] to-[#3b3b3b]" />
              </div>
            </div>
          </div>
          <div className="w-[3px] shrink-0 bg-[#bdbdbd]" />
          <div className="flex min-w-0 flex-1 flex-col">
            <ViewToolbar />
            <Canvas />
            <RenderToolbar />
            <StatusBar />
            <div className="h-px shrink-0 bg-[#777]" />
          </div>
        </div>
      </div>
      <div className="absolute left-[954px] top-[688px] h-[45px] w-[114px] border-[5px] border-[#fb2620]" />
    </div>
  );
}
